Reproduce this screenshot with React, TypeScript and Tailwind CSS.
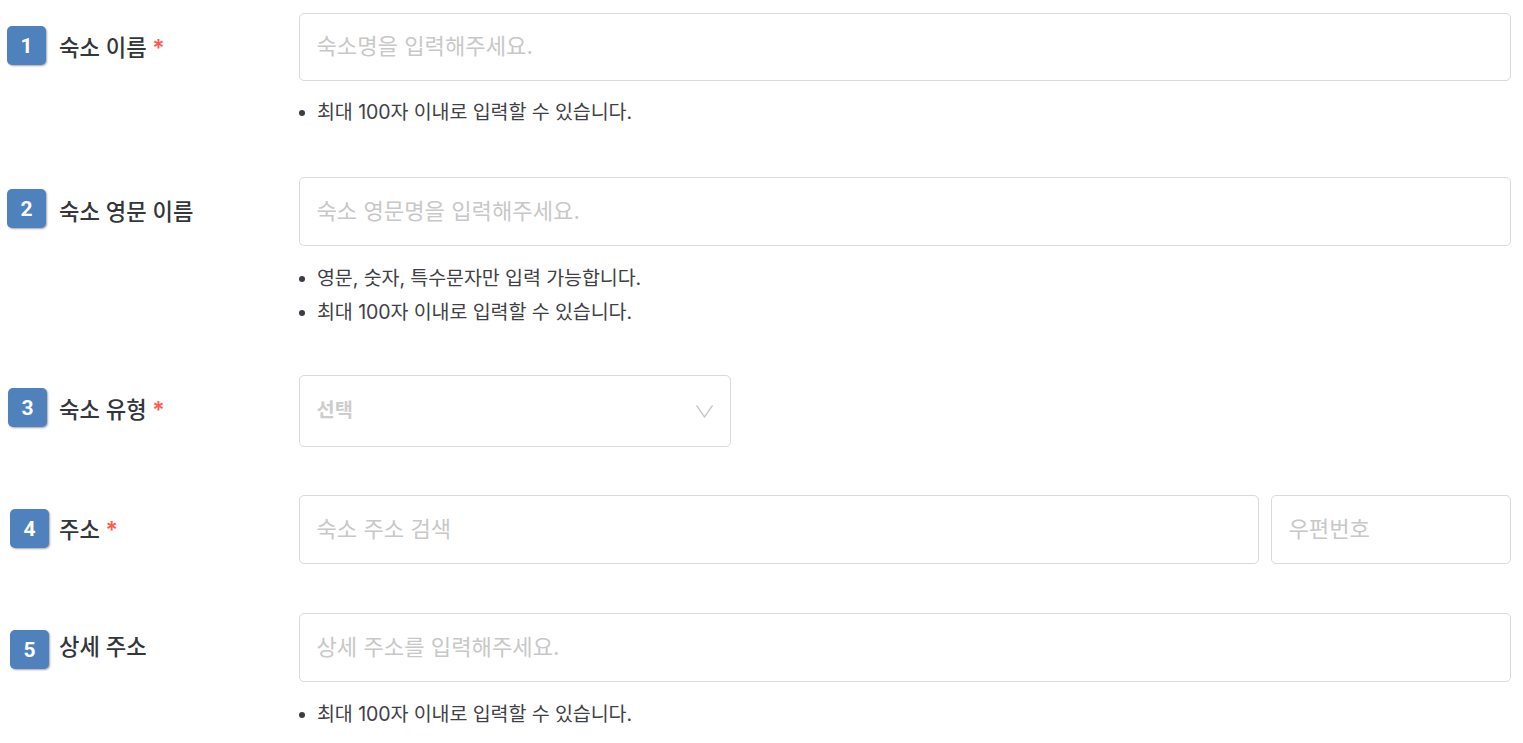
const Badge = ({ n, className }: { n: number; className: string }) => (
  <div className={`w-[39px] h-[39px] rounded-[5px] bg-[#4f81bd] text-white flex items-center justify-center pt-[2px] text-[21px] font-bold [font-family:Roboto,sans-serif] shadow-[1px_1px_2px_rgba(0,0,0,0.35)] shrink-0 ${className}`}>
    {n}
  </div>
)

const Label = ({ text, required, className = '' }: { text: string; required?: boolean; className?: string }) => (
  <span className={`h-[70px] flex items-center whitespace-pre text-[22.2px] font-medium text-[#33363b] ${className}`}>
    {text}
    {required && <span className="text-[#ff5a4f] font-semibold text-[23px]"> *</span>}
  </span>
)

const Notes = ({ items, className = 'mt-[19px]' }: { items: string[]; className?: string }) => (
  <ul className={`flex flex-col gap-[6px] ${className}`}>
    {items.map((t, i) => (
      <li key={i} className="flex items-center h-[28px] text-[19.55px] tracking-[-0.1px] text-[#3f4146]">
        <span className="w-[6px] h-[6px] rounded-full bg-[#3a3d42] mr-3" />
        {t}
      </li>
    ))}
  </ul>
)

const Field = ({ placeholder, className = 'h-[69px]' }: { placeholder: string; className?: string }) => (
  <div className={`rounded-[5px] border border-[#dadada] bg-white flex items-center pl-[16.5px] pr-4 text-[22.15px] text-[#c8c8c8] ${className}`}>
    {placeholder}
  </div>
)

export default function App() {
  return (
    <div className="w-[1523px] h-[743px] overflow-hidden bg-white pr-3 pt-[13px] [font-family:Inter,'Noto_Sans_CJK_KR',sans-serif]">
      <div className="flex">
        <div className="w-[299px] shrink-0 flex items-start gap-[13px] pl-[7px]">
          <Badge n={1} className="mt-[13px]" />
          <Label text="숙소 이름" required />
        </div>
        <div className="flex-1">
          <Field placeholder="숙소명을 입력해주세요." className="h-[68px]" />
          <Notes items={['최대 100자 이내로 입력할 수 있습니다.']} className="mt-[18px]" />
        </div>
      </div>
      <div className="flex mt-[50px]">
        <div className="w-[299px] shrink-0 flex items-start gap-[13px] pl-[7px]">
          <Badge n={2} className="mt-3" />
          <Label text="숙소 영문 이름" />
        </div>
        <div className="flex-1">
          <Field placeholder="숙소 영문명을 입력해주세요." />
          <Notes items={['영문, 숫자, 특수문자만 입력 가능합니다.', '최대 100자 이내로 입력할 수 있습니다.']} />
        </div>
      </div>
      <div className="flex mt-[48px]">
        <div className="w-[299px] shrink-0 flex items-start gap-3 pl-[8px]">
          <Badge n={3} className="mt-[13px]" />
          <Label text="숙소 유형" required />
        </div>
        <div className="w-[432px] h-[72px] rounded-[5px] border border-[#dadada] flex items-center justify-between pl-[16.5px] pr-[17px] text-[19.8px] font-semibold text-[#cdcdcd]">
          선택
          <svg width="17" height="13" viewBox="0 0 17 13" fill="none" stroke="#c8c8c8" strokeWidth="1.4">
            <path d="M0.5 0.5L8.5 12L16.5 0.5" />
          </svg>
        </div>
      </div>
      <div className="flex mt-[48px]">
        <div className="w-[299px] shrink-0 flex items-start gap-[10px] pl-[10px]">
          <Badge n={4} className="mt-[14px]" />
          <Label text="주소" required />
        </div>
        <div className="flex-1 flex gap-3">
          <Field placeholder="숙소 주소 검색" className="flex-1 h-[69px]" />
          <Field placeholder="우편번호" className="w-[240px] h-[69px]" />
        </div>
      </div>
      <div className="flex mt-[48px]">
        <div className="w-[299px] shrink-0 flex items-start gap-[10px] pl-[10px]">
          <Badge n={5} className="mt-[17px]" />
          <Label text="상세 주소" className="-mt-px" />
        </div>
        <div className="flex-1">
          <Field placeholder="상세 주소를 입력해주세요." />
          <Notes items={['최대 100자 이내로 입력할 수 있습니다.']} />
        </div>
      </div>
    </div>
  )
}
